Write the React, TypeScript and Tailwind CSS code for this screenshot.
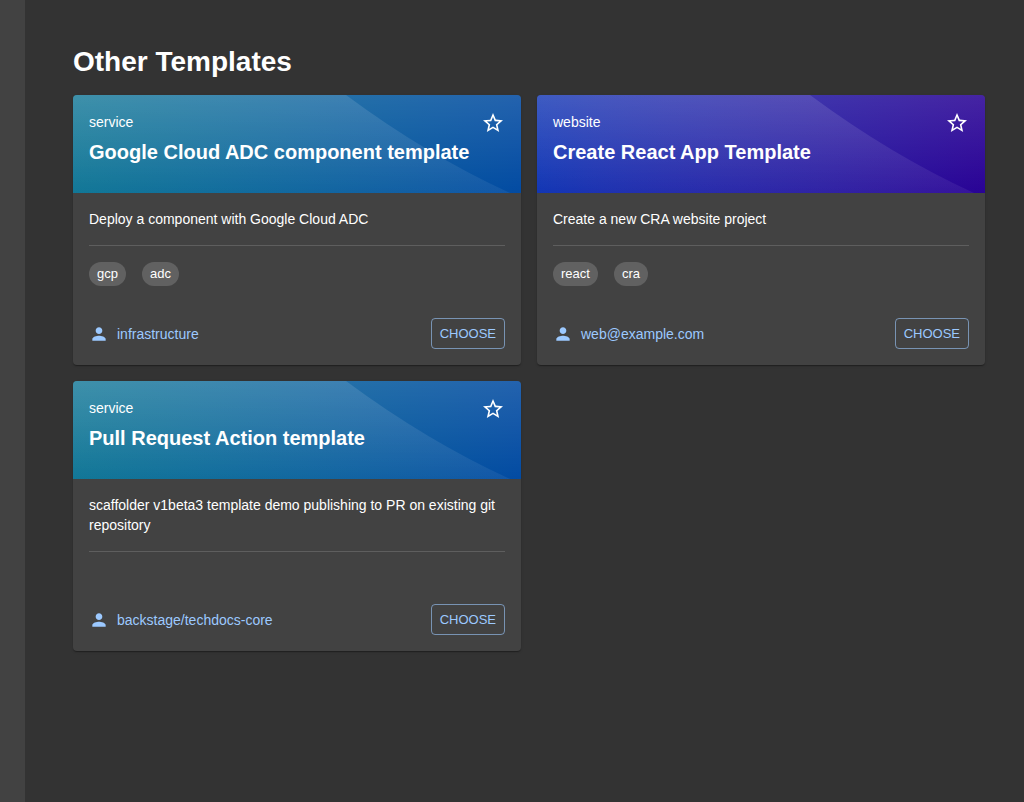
import React from "react";

type Template = {
  kind: string;
  title: string;
  description: string;
  tags: string[];
  owner: string;
  header: string;
};

const serviceHeader = "bg-linear-to-r from-[#006d8f] to-[#0049a1]";
const websiteHeader = "bg-linear-to-r from-[#0027af] to-[#270094]";

const templates: Template[] = [
  {
    kind: "service",
    title: "Google Cloud ADC component template",
    description: "Deploy a component with Google Cloud ADC",
    tags: ["gcp", "adc"],
    owner: "infrastructure",
    header: serviceHeader,
  },
  {
    kind: "website",
    title: "Create React App Template",
    description: "Create a new CRA website project",
    tags: ["react", "cra"],
    owner: "web@example.com",
    header: websiteHeader,
  },
  {
    kind: "service",
    title: "Pull Request Action template",
    description:
      "scaffolder v1beta3 template demo publishing to PR on existing git repository",
    tags: [],
    owner: "backstage/techdocs-core",
    header: serviceHeader,
  },
];

function HeaderWave({ id }: { id: string }) {
  return (
    <svg
      className="absolute inset-0 h-full w-full"
      viewBox="0 0 448 98"
      preserveAspectRatio="none"
      aria-hidden="true"
    >
      <defs>
        <linearGradient id={id} x1="0" y1="0" x2="0" y2="1">
          <stop offset="0" stopColor="#fff" stopOpacity="0.14" />
          <stop offset="1" stopColor="#fff" stopOpacity="0.01" />
        </linearGradient>
        <linearGradient id={`${id}-curve`} x1="0" y1="0" x2="0" y2="1">
          <stop offset="0" stopColor="#fff" stopOpacity="0.12" />
          <stop offset="1" stopColor="#fff" stopOpacity="0.06" />
        </linearGradient>
      </defs>
      <rect width="448" height="98" fill={`url(#${id})`} />
      <path d="M0 0H273Q354 60 437 98H0Z" fill={`url(#${id}-curve)`} />
    </svg>
  );
}

function StarIcon() {
  return (
    <svg className="h-6 w-6" viewBox="0 0 24 24" fill="currentColor" aria-hidden="true">
      <path d="M22 9.24l-7.19-.62L12 2 9.19 8.63 2 9.24l5.46 4.73L5.82 21 12 17.27 18.18 21l-1.63-7.03L22 9.24zM12 15.4l-3.76 2.27 1-4.28-3.32-2.88 4.38-.38L12 6.1l1.71 4.04 4.38.38-3.32 2.88 1 4.28L12 15.4z" />
    </svg>
  );
}

function PersonIcon() {
  return (
    <svg className="h-5 w-5" viewBox="0 0 24 24" fill="currentColor" aria-hidden="true">
      <path d="M12 12c2.21 0 4-1.79 4-4s-1.79-4-4-4-4 1.79-4 4 1.79 4 4 4zm0 2c-2.67 0-8 1.34-8 4v2h16v-2c0-2.66-5.33-4-8-4z" />
    </svg>
  );
}

function TemplateCard({ template, index }: { template: Template; index: number }) {
  return (
    <article className="flex flex-col overflow-hidden rounded bg-[#424242] shadow-[0_2px_1px_-1px_rgba(0,0,0,0.2),0_1px_1px_rgba(0,0,0,0.14),0_1px_3px_rgba(0,0,0,0.12)]">
      <header className={`relative px-4 pt-4 pb-[26px] ${template.header}`}>
        <HeaderWave id={`wave-${index}`} />
        <div className="relative flex items-start justify-between">
          <p className="text-sm leading-[22px]">{template.kind}</p>
          <button type="button" aria-label={`Star ${template.title}`} className="-mb-0.5 cursor-pointer">
            <StarIcon />
          </button>
        </div>
        <h2 className="relative pt-1 text-xl leading-[30px] font-bold">{template.title}</h2>
      </header>
      <div className="flex flex-1 flex-col p-4">
        <p className="border-b border-[#5e5e5e] pb-4 text-sm leading-5">{template.description}</p>
        {template.tags.length > 0 && (
          <ul className="flex flex-wrap gap-4 pt-4 pb-8">
            {template.tags.map((tag) => (
              <li key={tag} className="h-6 rounded-full bg-[#616161] px-2 text-[13px] leading-6">
                {tag}
              </li>
            ))}
          </ul>
        )}
        <footer className="mt-auto flex items-center justify-between">
          <a href="#owner" className="flex items-center gap-2 text-sm leading-5 text-[#9cc9ff]">
            <PersonIcon />
            {template.owner}
          </a>
          <button
            type="button"
            className="cursor-pointer rounded border border-[#9cc9ff]/60 px-2 py-1 text-[13px] leading-[21px] text-[#9cc9ff]"
          >
            CHOOSE
          </button>
        </footer>
      </div>
    </article>
  );
}

export default function App() {
  return (
    <div className="flex min-h-screen bg-[#333333] font-['Liberation_Sans',Arial,sans-serif] text-white">
      <aside className="w-[25px] shrink-0 bg-[#424242]" />
      <main className="flex-1 pt-10 pr-[39px] pb-10 pl-12">
        <h1 className="pb-3 text-[28px] leading-[43px] font-bold">Other Templates</h1>
        <section className="grid auto-rows-fr grid-cols-2 gap-4">
          {templates.map((template, index) => (
            <TemplateCard key={template.title} template={template} index={index} />
          ))}
        </section>
      </main>
    </div>
  );
}
